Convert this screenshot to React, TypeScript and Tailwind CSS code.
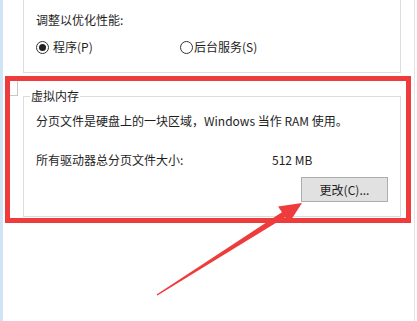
import React from 'react';

const font = { fontFamily: '"Noto Sans CJK SC", "Noto Sans", sans-serif' };

function Radio({ checked }: { checked?: boolean }) {
  return (
    <span className="w-[13px] h-[13px] rounded-full border border-[#333] bg-white flex items-center justify-center shrink-0">
      {checked && <span className="w-[7px] h-[7px] rounded-full bg-[#222]" />}
    </span>
  );
}

export default function App() {
  return (
    <div className="relative w-[417px] h-[321px] bg-white overflow-hidden flex text-[12px] text-[#1e1e1e]" style={font}>
      {/* window edge */}
      <div className="w-[3px] h-full bg-[#cfe4f4]" />

      <div className="w-[412px] h-full border-r border-[#e3e3e3] pl-[20px]">
        {/* performance group */}
        <div className="w-[378px] h-[73px] border-x border-b border-[#dcdcdc] px-[12px] pt-[12px]">
          <div className="leading-[16px]">调整以优化性能:</div>
          <div className="flex items-center mt-[11px] leading-[16px]">
            <div className="w-[144px] flex items-center gap-[4px]">
              <Radio checked />
              <span>程序(P)</span>
            </div>
            <div className="flex items-center gap-[1px]">
              <Radio />
              <span>后台服务(S)</span>
            </div>
          </div>
        </div>

        {/* virtual memory group */}
        <fieldset className="w-[378px] mt-[15px] border border-[#dcdcdc] px-[12px] pb-[14px]">
          <legend className="ml-[-6px] px-[1px] leading-[16px]">虚拟内存</legend>
          <div className="mt-[9px] leading-[16px]">分页文件是硬盘上的一块区域，Windows 当作 RAM 使用。</div>
          <div className="flex mt-[23px] leading-[16px]">
            <span className="w-[236px]">所有驱动器总分页文件大小:</span>
            <span>512 MB</span>
          </div>
          <div className="flex justify-end mt-[9px]">
            <button className="w-[87px] h-[25px] bg-[#e1e1e1] border border-[#adadad] text-[12px] leading-[16px] text-[#1e1e1e]">
              更改(C)...
            </button>
          </div>
        </fieldset>
      </div>

      {/* annotation overlay */}
      <div className="absolute left-[10px] top-[81px] w-[8px] h-[15px] border-r border-b border-[#c8c8c8] bg-white" />
      <div className="absolute left-[5px] top-[76px] w-[406px] h-[147px] border-[5px] border-[#ee3b3b]" />
      <svg className="absolute left-0 top-0" width="417" height="321" viewBox="0 0 417 321">
        <polygon
          fill="#ee3b3b"
          points="302,203 288.9,223.2 285.1,217.3 157.4,295.6 156.6,294.4 281.9,212.3 278.1,206.4"
        />
      </svg>
    </div>
  );
}
